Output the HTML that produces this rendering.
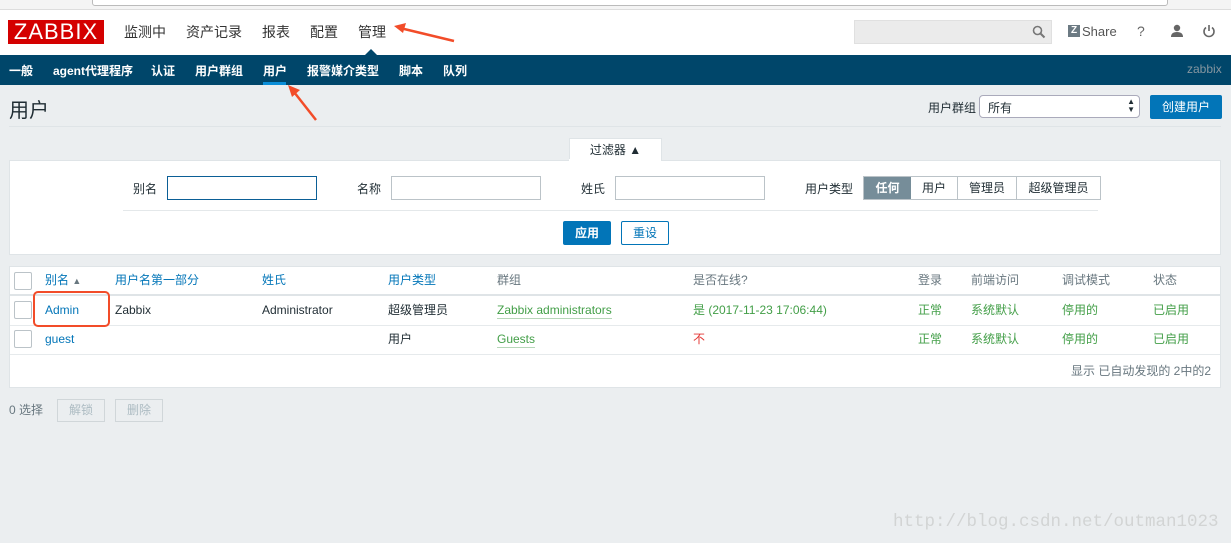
<!DOCTYPE html>
<html><head><meta charset="utf-8"><style>
*{box-sizing:border-box;margin:0;padding:0}
body{width:1231px;height:543px;overflow:hidden;background:#ebeef0;font-family:"Liberation Sans","Noto Sans CJK SC",sans-serif;font-size:12px;color:#1f2c33;position:relative}
.abs{position:absolute;white-space:nowrap}
a{color:#0275b8;text-decoration:none}
.g{color:#429e47}
.row span,.row a{position:absolute;top:0;height:16px;line-height:16px}
.nav span{position:absolute;top:0}
</style></head><body>
<div class="abs" style="left:0;top:0;width:1231px;height:10px;background:#f4f4f4;border-bottom:1px solid #ddd"></div>
<div class="abs" style="left:92px;top:-4px;width:1076px;height:10px;background:#fff;border:1px solid #bbb;border-radius:3px"></div>
<div class="abs" style="left:0;top:10px;width:1231px;height:45px;background:#fff"></div>
<div class="abs" style="left:8px;top:20px;width:96px;height:24px;background:#d40000;color:#fff;font-size:22px;line-height:24px;text-align:center;letter-spacing:1px">ZABBIX</div>
<div class="abs nav" style="left:0;top:22px;font-size:14px;color:#333;width:500px;height:20px">
<span style="left:124px">监测中</span><span style="left:186px">资产记录</span><span style="left:262px">报表</span><span style="left:310px">配置</span><span style="left:358px">管理</span></div>
<svg class="abs" style="left:392px;top:22px" width="64" height="22"><line x1="62" y1="19" x2="8" y2="6" stroke="#f24c29" stroke-width="2.5"/><polygon points="2,4 14,1 11,11" fill="#f24c29"/></svg>
<div class="abs" style="left:854px;top:20px;width:198px;height:24px;background:#ebebeb;border:1px solid #e0e0e0"></div>
<svg class="abs" style="left:1032px;top:25px" width="14" height="14"><circle cx="5.5" cy="5.5" r="4" fill="none" stroke="#777" stroke-width="1.6"/><line x1="8.5" y1="8.5" x2="12.5" y2="12.5" stroke="#777" stroke-width="2"/></svg>
<div class="abs" style="left:1068px;top:25px;width:12px;height:12px;background:#6c7a83;color:#fff;font-size:10px;font-weight:bold;line-height:12px;text-align:center">Z</div>
<div class="abs" style="left:1082px;top:24px;font-size:13px;color:#555">Share</div>
<div class="abs" style="left:1137px;top:23px;font-size:14px;color:#666">?</div>
<svg class="abs" style="left:1170px;top:24px" width="14" height="14"><circle cx="7" cy="4" r="3.2" fill="#666"/><path d="M1 13 Q1 8 7 8 Q13 8 13 13Z" fill="#666"/></svg>
<svg class="abs" style="left:1202px;top:24px" width="14" height="14"><path d="M4 3.5 A5 5 0 1 0 10 3.5" fill="none" stroke="#666" stroke-width="1.6"/><line x1="7" y1="1" x2="7" y2="7" stroke="#666" stroke-width="1.6"/></svg>
<div class="abs" style="left:0;top:55px;width:1231px;height:30px;background:#00466a"></div>
<div class="abs" style="left:364px;top:49px;width:0;height:0;border-left:7px solid transparent;border-right:7px solid transparent;border-bottom:7px solid #00466a"></div>
<div class="abs nav" style="left:0;top:62px;color:#fff;font-weight:bold;font-size:12px;width:500px;height:16px">
<span style="left:9px">一般</span><span style="left:53px">agent代理程序</span><span style="left:151px">认证</span><span style="left:195px">用户群组</span><span style="left:263px">用户</span><span style="left:307px">报警媒介类型</span><span style="left:399px">脚本</span><span style="left:443px">队列</span></div>
<div class="abs" style="left:263px;top:82px;width:23px;height:3px;background:#0b8ed8"></div>
<div class="abs" style="left:1187px;top:62px;color:#8596a0;font-size:12px">zabbix</div>
<svg class="abs" style="left:286px;top:84px" width="34" height="38"><line x1="30" y1="36" x2="8" y2="8" stroke="#f24c29" stroke-width="2.5"/><polygon points="2,1 14,6 6,13" fill="#f24c29"/></svg>
<div class="abs" style="left:9px;top:94px;font-size:20px;color:#1f2c33">用户</div>
<div class="abs" style="left:928px;top:99px;font-size:12px">用户群组</div>
<div class="abs" style="left:979px;top:95px;width:161px;height:23px;background:#fff;border:1px solid #aab;border-radius:4px;padding:3px 8px;font-size:12px">所有<span style="position:absolute;right:4px;top:2px;font-size:8px;line-height:8px">▲<br>▼</span></div>
<div class="abs" style="left:1150px;top:95px;width:72px;height:24px;background:#0275b8;color:#fff;text-align:center;line-height:24px;border-radius:2px">创建用户</div>
<div class="abs" style="left:9px;top:126px;width:1212px;height:1px;background:#dfe4e7"></div>
<div class="abs" style="left:569px;top:138px;width:93px;height:23px;background:#fff;border:1px solid #dfe4e7;border-bottom:none;text-align:center;line-height:22px">过滤器 ▲</div>
<div class="abs" style="left:9px;top:160px;width:1212px;height:95px;background:#fff;border:1px solid #dfe4e7"></div>
<div class="abs" style="left:569px;top:159px;width:92px;height:3px;background:#fff"></div>
<div class="abs" style="left:133px;top:180px">别名</div>
<div class="abs" style="left:167px;top:176px;width:150px;height:24px;border:1px solid #0b5f96"></div>
<div class="abs" style="left:357px;top:180px">名称</div>
<div class="abs" style="left:391px;top:176px;width:150px;height:24px;border:1px solid #bbc3c8"></div>
<div class="abs" style="left:581px;top:180px">姓氏</div>
<div class="abs" style="left:615px;top:176px;width:150px;height:24px;border:1px solid #bbc3c8"></div>
<div class="abs" style="left:805px;top:180px">用户类型</div>
<div class="abs" style="left:863px;top:176px;height:24px;display:flex;border:1px solid #bbc3c8;line-height:22px">
<span style="width:47px;background:#768d99;color:#fff;text-align:center;font-weight:bold">任何</span>
<span style="width:47px;text-align:center;border-right:1px solid #bbc3c8">用户</span>
<span style="width:59px;text-align:center;border-right:1px solid #bbc3c8">管理员</span>
<span style="width:83px;text-align:center">超级管理员</span></div>
<div class="abs" style="left:123px;top:210px;width:975px;height:1px;background:#e4e8ea"></div>
<div class="abs" style="left:563px;top:221px;width:48px;height:24px;background:#0275b8;color:#fff;text-align:center;line-height:24px;font-weight:bold;border-radius:2px">应用</div>
<div class="abs" style="left:621px;top:221px;width:48px;height:24px;border:1px solid #0275b8;color:#0275b8;text-align:center;line-height:22px;border-radius:2px">重设</div>
<div class="abs" style="left:9px;top:266px;width:1212px;height:122px;background:#fff;border:1px solid #dfe4e7"></div>
<div class="abs" style="left:10px;top:294px;width:1210px;height:2px;background:#dfe4e7"></div>
<div class="abs" style="left:10px;top:325px;width:1210px;height:1px;background:#e6eaec"></div>
<div class="abs" style="left:10px;top:354px;width:1210px;height:1px;background:#e6eaec"></div>
<div class="abs" style="left:14px;top:272px;width:18px;height:18px;border:1px solid #bbc3c8;border-radius:2px"></div>
<div class="abs" style="left:14px;top:301px;width:18px;height:18px;border:1px solid #bbc3c8;border-radius:2px"></div>
<div class="abs" style="left:14px;top:330px;width:18px;height:18px;border:1px solid #bbc3c8;border-radius:2px"></div>
<div class="abs row" style="top:272px;left:0;width:1231px;height:16px;color:#68777f">
<a style="left:45px">别名 <span style="position:static;font-size:9px;color:#68777f">▲</span></a><a style="left:115px">用户名第一部分</a><a style="left:262px">姓氏</a><a style="left:388px">用户类型</a><span style="left:497px">群组</span><span style="left:693px">是否在线?</span><span style="left:918px">登录</span><span style="left:971px">前端访问</span><span style="left:1062px">调试模式</span><span style="left:1153px">状态</span></div>
<div class="abs row" style="top:302px;left:0;width:1231px;height:16px">
<a style="left:45px">Admin</a><span style="left:115px">Zabbix</span><span style="left:262px">Administrator</span><span style="left:388px">超级管理员</span><span class="g" style="left:497px;border-bottom:1px solid #b7d7b9;height:17px">Zabbix administrators</span><span class="g" style="left:693px">是 (2017-11-23 17:06:44)</span><span class="g" style="left:918px">正常</span><span class="g" style="left:971px">系统默认</span><span class="g" style="left:1062px">停用的</span><span class="g" style="left:1153px">已启用</span></div>
<div class="abs row" style="top:331px;left:0;width:1231px;height:16px">
<a style="left:45px">guest</a><span style="left:388px">用户</span><span class="g" style="left:497px;border-bottom:1px solid #b7d7b9;height:17px">Guests</span><span style="left:693px;color:#e33734">不</span><span class="g" style="left:918px">正常</span><span class="g" style="left:971px">系统默认</span><span class="g" style="left:1062px">停用的</span><span class="g" style="left:1153px">已启用</span></div>
<div class="abs" style="left:33px;top:291px;width:77px;height:36px;border:2px solid #f24c29;border-radius:5px"></div>
<div class="abs" style="left:1071px;top:363px;color:#68777f;line-height:16px">显示 已自动发现的 2中的2</div>
<div class="abs" style="left:9px;top:402px;color:#68777f;line-height:16px">0 选择</div>
<div class="abs" style="left:57px;top:399px;width:48px;height:23px;border:1px solid #d0d6d9;background:#ebeef0;color:#acbbc2;text-align:center;line-height:21px">解锁</div>
<div class="abs" style="left:115px;top:399px;width:48px;height:23px;border:1px solid #d0d6d9;background:#ebeef0;color:#acbbc2;text-align:center;line-height:21px">删除</div>
<div class="abs" style="left:893px;top:512px;font-family:'Liberation Mono',monospace;font-size:17.5px;color:#d2d4d4">http://blog.csdn.net/outman1023</div>
</body></html>
